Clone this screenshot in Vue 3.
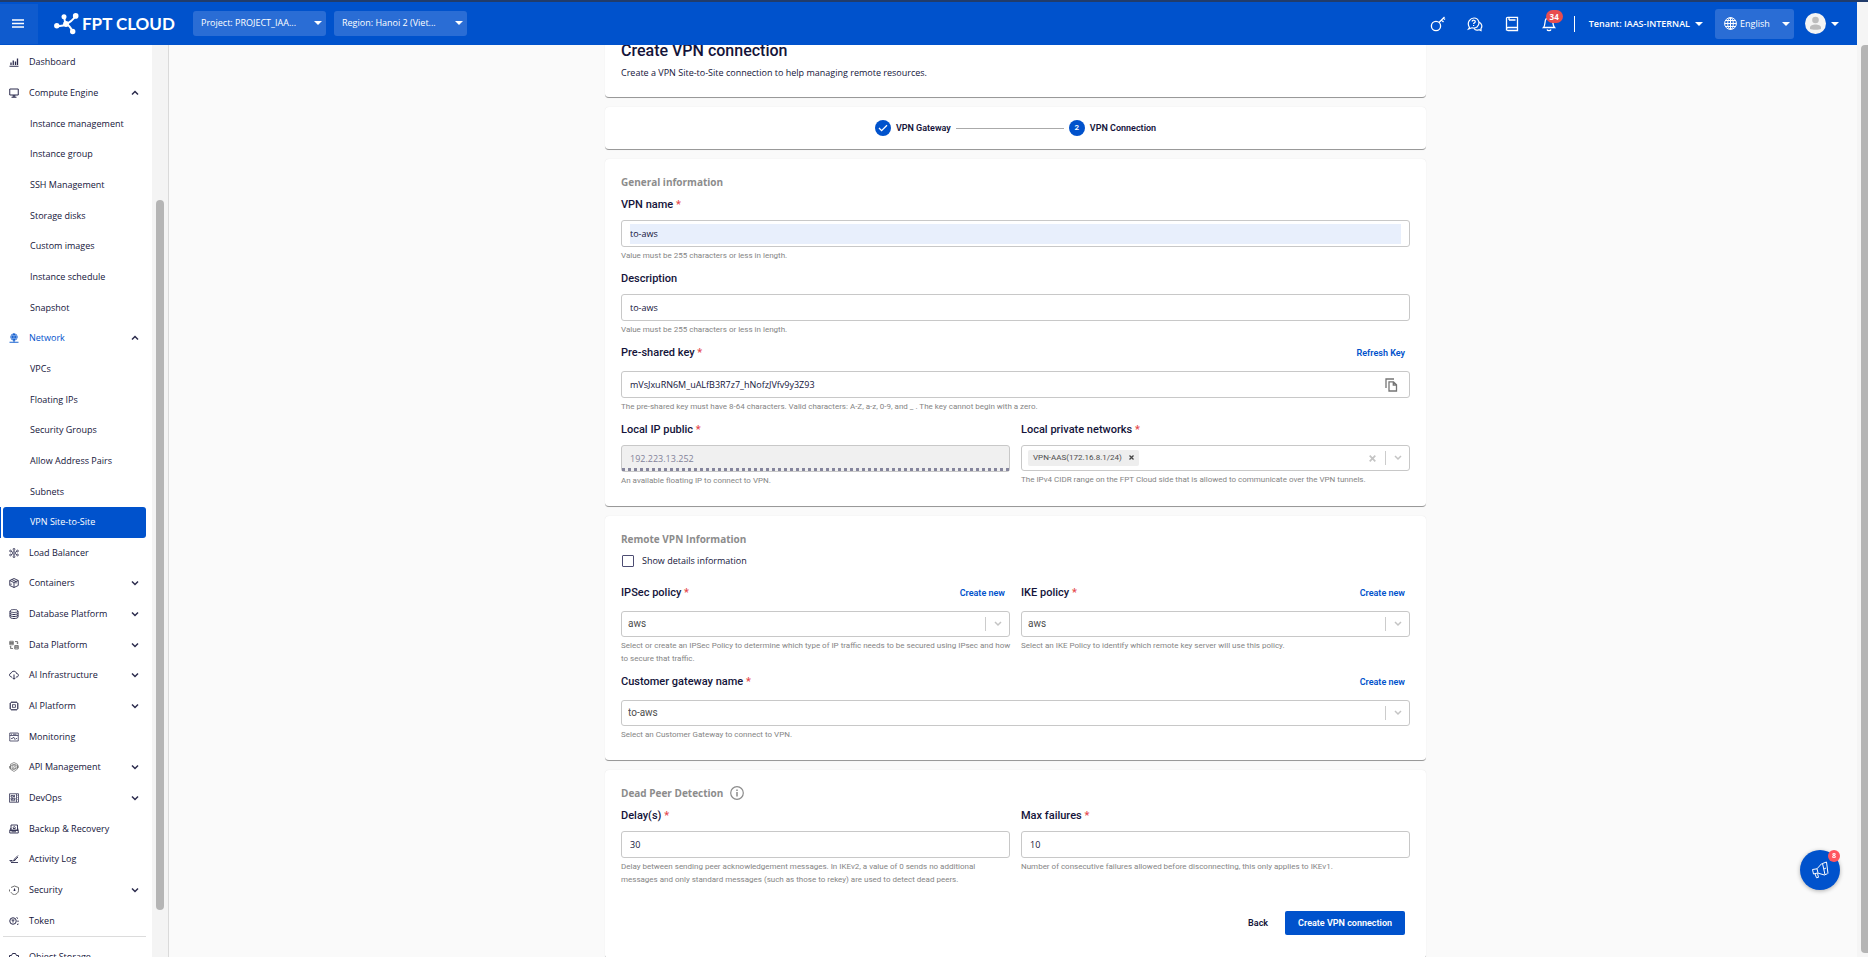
<script setup>
import { ref } from 'vue'

const icons = {
  chart: '<path d="M1 18.500h18" stroke-width="2"/><path d="M4 16V11M8.500 16V7M13 16V9M17 16V3" stroke-width="2.600"/>',
  monitor: '<path d="M1.500 2h17v12h-17zM10 14v4M5 18.500h10M7 16h6" stroke-width="2"/>',
  network: '<circle cx="10" cy="8" r="6.500"/><path d="M3.500 8h13M10 1.500v17M10 1.500c-4 3-4 10 0 13M10 1.500c4 3 4 10 0 13M1 18.500h18" stroke-width="1.800"/>',
  balancer: '<circle cx="10" cy="10" r="2.500"/><path d="M10 7.500V4M10 12.500V16M12 9l4-2.500M8 9L4 6.500M12 11l4 2.500M8 11l-4 2.500"/><circle cx="10" cy="2.500" r="1.800"/><circle cx="10" cy="17.500" r="1.800"/><circle cx="17" cy="6" r="1.800"/><circle cx="3" cy="6" r="1.800"/><circle cx="17" cy="14" r="1.800"/><circle cx="3" cy="14" r="1.800"/>',
  box: '<path d="M10 1l8.500 4v10L10 19l-8.500-4V5zM1.500 5L10 9l8.500-4M10 9v10M5.500 3l8.500 4v4M4 11v3" stroke-width="1.800"/>',
  database: '<ellipse cx="10" cy="4" rx="8" ry="3"/><path d="M2 4v12c0 4 16 4 16 0V4M2 8c0 4 16 4 16 0M2 12c0 4 16 4 16 0" stroke-width="2"/>',
  data: '<path d="M1.500 2.500h7v7h-7zM1.500 5h7M1.500 7h7M11.500 11h7v7h-7zM11.500 13.500h7M11.500 15.500h7M12 3h5v4M8 17H3v-4M15 5.500l2 2 2-2M1.500 14l1.500-1.500L5 14" stroke="#555"/>',
  cloud: '<path d="M6 14H5C0 13 0 7 4 6.500 6 1 14 1 15 7c5 0 5 7 0 7h-1M10 9v9M7 15.500l3 3 3-3" stroke-width="2"/>',
  chip: '<rect x="3" y="3" width="14" height="14" rx="1"/><rect x="7" y="7.500" width="6" height="5"/><path d="M6 3V.5M10 3V.5M14 3V.5M6 17v2.500M10 17v2.500M14 17v2.500M3 6H.5M3 10H.5M3 14H.5M17 6h2.500M17 10h2.500M17 14h2.500" stroke-width="2"/>',
  window: '<path d="M1.500 2h17v16h-17zM1.500 7h17M4 4.500h2M8 4.500h7M4 13h3l2-3 3 5 2-2h2"/>',
  api: '<path d="M10 1l7 3.500V14L10 19l-7-4.500v-10zM1 8c0 10 16 8 18-1M1 13C2 3 17 2 19 12M8 11l4-2" stroke="#555" stroke-width="1.200"/><circle cx="10" cy="10" r="4" stroke="#555" stroke-width="1.200"/>',
  devops: '<path d="M1 1.500h18v17H1zM15 2v16M3.500 15.500h9"/><path d="M4 5h5v3H4zM4 10h3v3H4zM9.500 10h2.500v3H9.500zM11 4v4M17 5v1M17 9v1M17 13v1"/>',
  backup: '<path d="M4 2h13v10H4zM1.500 13h17v5h-17zM1.500 13L4 8M18.500 13L17 8M5 15.500h9" stroke-width="1.800"/><path d="M8 9h5M8 7.500c1-3 4-3 5 0" stroke-width="1.800"/>',
  activity: '<path d="M18 3l-7 7M18 6l-6 6M11 10l-2 4 4-2M1 13h6M4 17h14M3 15c3-4 4 0 2 2" stroke-width="1.800"/>',
  shield: '<path d="M4 5l7-3 8 3v6c0 5-5 7.500-8 8.500-3-1-6-2.500-7-5M1 9v4" stroke="#555" stroke-width="1.700"/><path d="M11 7v5M9 10.500h4" stroke-width="2"/>',
  token: '<circle cx="8" cy="10" r="6.500" stroke-width="2"/><path d="M5 8h6M8 8v5M15 3l3 2M16 17l3-1M18 9v3" stroke-width="2"/>',
  storage: '<path d="M1 7h4l2-4h6l2 4h4v12H1z" stroke-width="2"/>'
}

const menu = [
  { label: 'Dashboard', icon: 'chart' },
  { label: 'Compute Engine', icon: 'monitor', arrow: 'up' },
  { label: 'Instance management', sub: true },
  { label: 'Instance group', sub: true },
  { label: 'SSH Management', sub: true },
  { label: 'Storage disks', sub: true },
  { label: 'Custom images', sub: true },
  { label: 'Instance schedule', sub: true },
  { label: 'Snapshot', sub: true },
  { label: 'Network', icon: 'network', arrow: 'up', open: true },
  { label: 'VPCs', sub: true },
  { label: 'Floating IPs', sub: true },
  { label: 'Security Groups', sub: true },
  { label: 'Allow Address Pairs', sub: true },
  { label: 'Subnets', sub: true },
  { label: 'VPN Site-to-Site', sub: true, active: true },
  { label: 'Load Balancer', icon: 'balancer' },
  { label: 'Containers', icon: 'box', arrow: 'down' },
  { label: 'Database Platform', icon: 'database', arrow: 'down' },
  { label: 'Data Platform', icon: 'data', arrow: 'down' },
  { label: 'AI Infrastructure', icon: 'cloud', arrow: 'down' },
  { label: 'AI Platform', icon: 'chip', arrow: 'down' },
  { label: 'Monitoring', icon: 'window' },
  { label: 'API Management', icon: 'api', arrow: 'down' },
  { label: 'DevOps', icon: 'devops', arrow: 'down' },
  { label: 'Backup & Recovery', icon: 'backup' },
  { label: 'Activity Log', icon: 'activity' },
  { label: 'Security', icon: 'shield', arrow: 'down' },
  { label: 'Token', icon: 'token' }
]

const name = ref('to-aws')
const description = ref('to-aws')
const sharedKey = ref('mVsJxuRN6M_uALfB3R7z7_hNofzJVfv9y3Z93')
const showDetails = ref(false)
const delay = ref('30')
const maxFailures = ref('10')
</script>

<template>
  <div class="app">
    <div class="strip"></div>
    <div class="shell">
      <header class="topbar">
        <button class="burger" aria-label="Toggle menu">
          <svg width="12" height="9" viewBox="0 0 12 9"><path d="M0 1h12M0 4.500h12M0 8h12" stroke="#fff" stroke-width="1.600" /></svg>
        </button>
        <a href="#" class="logo">
          <svg width="25" height="22" viewBox="0 0 25 22" fill="#fff" stroke="#fff">
            <g stroke="none"><circle cx="2.800" cy="12.700" r="2.700" /><circle cx="10" cy="3.700" r="2.500" /><circle cx="21.700" cy="2.900" r="2.800" /><circle cx="18.700" cy="18.500" r="2.700" /><circle cx="12" cy="11" r="2.900" /></g>
            <path d="M3 12.700c4 .8 7-.2 9-2M10 4l1.500 7M12 11c4-1.500 7-4 9.500-8M12 11c3 1 5 4 6.500 7.500" fill="none" stroke-width="1.900" />
          </svg>
          <span>FPT CLOUD</span>
        </a>
        <div class="pick scope">
          <select aria-label="Project"><option>Project: PROJECT_IAA...</option></select>
          <i class="caret"></i>
        </div>
        <div class="pick scope">
          <select aria-label="Region"><option>Region: Hanoi 2 (Viet...</option></select>
          <i class="caret"></i>
        </div>
        <div class="tools">
          <button aria-label="Keys"><svg width="16" height="16" viewBox="0 0 16 16"><circle cx="6" cy="10" r="4.600" /><path d="M9 6.500L14.500 1M11.500 4l2 2M13.500 2l1.500 1.500" /></svg></button>
          <button aria-label="Support"><svg width="16" height="16" viewBox="0 0 16 16"><path d="M2.500 11.500C-1 6 4 2 7 2c5 0 6.500 6 3 9-2 1.500-4 1-5 .8L1.500 13zM12 6c3 1.500 3.500 4.500 2 6.500v2l-2-.8c-2 .8-4 .3-5-1.200M5 5.500c.5-2 3.500-1.500 3.200.3-.2 1-1.600 1-1.600 2.200M6.600 9v1" stroke-width="1.200" /></svg></button>
          <button aria-label="Docs"><svg width="16" height="16" viewBox="0 0 16 16"><path d="M2.500 14.500V2.500c0-.8.4-1.200 1.200-1.200h9.800v10.200H4c-2 0-2 3 0 3h9.500v-3M5 4h6.500M5 2v2" /></svg></button>
          <button aria-label="Notifications" class="bell"><svg width="16" height="16" viewBox="0 0 16 16"><path d="M2.500 11.500c2-2 1-7 2.500-8.500s5-1.500 6 0 .5 6.500 2.500 8.500zM6 13.500c.5 1.500 3.500 1.500 4 0" /></svg><b>34</b></button>
        </div>
        <button class="tenant">Tenant: IAAS-INTERNAL <i class="caret"></i></button>
        <div class="pick lang">
          <svg width="13" height="13" viewBox="0 0 13 13" fill="none" stroke="#fff"><circle cx="6.500" cy="6.500" r="5.900" /><ellipse cx="6.500" cy="6.500" rx="2.800" ry="5.900" /><path d="M6.500.5v12M.5 6.500h12M1.500 3.500h10M1.500 9.500h10" /></svg>
          <select aria-label="Language"><option>English</option></select>
          <i class="caret"></i>
        </div>
        <button class="user" aria-label="Account">
          <svg width="21" height="21" viewBox="0 0 21 21"><circle cx="10.500" cy="10.500" r="10.500" fill="#f4f4f4" /><circle cx="10.500" cy="7" r="3.300" fill="#bdbdbd" /><path d="M5 14.500c0-4 11-4 11 0v1.500c-2 1-9 1-11 0z" fill="#bdbdbd" /></svg>
          <i class="caret"></i>
        </button>
      </header>

      <div class="body">
        <aside class="sidebar">
          <nav>
            <ul class="menu">
              <li v-for="m in menu" :key="m.label" :class="{ sub: m.sub, active: m.active, open: m.open }">
                <a href="#">
                  <svg v-if="m.icon" class="ico" viewBox="0 0 20 20" v-html="icons[m.icon]"></svg>
                  <span>{{ m.label }}</span>
                  <svg v-if="m.arrow" class="arrow" viewBox="0 0 8 6"><path :d="m.arrow === 'up' ? 'M1 4.500l3-3 3 3' : 'M1 1.500l3 3 3-3'" /></svg>
                </a>
              </li>
            </ul>
            <ul class="more">
              <li><a href="#"><svg class="ico" viewBox="0 0 20 20" v-html="icons.storage"></svg><span>Object Storage</span></a></li>
            </ul>
          </nav>
          <div class="track"><div class="thumb"></div></div>
        </aside>

        <main>
          <div class="column">
            <section class="card intro">
              <h1>Create VPN connection</h1>
              <p>Create a VPN Site-to-Site connection to help managing remote resources.</p>
            </section>

            <section class="card stepper">
              <ol class="steps">
                <li><span class="dot"><svg width="10" height="8" viewBox="0 0 10 8"><path d="M1 4l2.600 2.600L9 1.200" fill="none" stroke="#fff" stroke-width="1.300" /></svg></span>VPN Gateway</li>
                <li class="line"></li>
                <li><span class="dot">2</span>VPN Connection</li>
              </ol>
            </section>

            <section class="card">
              <h2>General information</h2>
              <div class="field">
                <div class="head"><label for="name">VPN name <em>*</em></label></div>
                <div class="box"><input id="name" v-model="name" class="filled" /></div>
                <p class="help">Value must be 255 characters or less in length.</p>
              </div>
              <div class="field">
                <div class="head"><label for="desc">Description</label></div>
                <div class="box"><input id="desc" v-model="description" /></div>
                <p class="help">Value must be 255 characters or less in length.</p>
              </div>
              <div class="field">
                <div class="head tall"><label for="key">Pre-shared key <em>*</em></label><button class="link">Refresh Key</button></div>
                <div class="box">
                  <input id="key" v-model="sharedKey" />
                  <button class="copy" aria-label="Copy key"><svg width="13" height="14" viewBox="0 0 13 14"><path d="M1 10V1h8M4 3.800h4.500l3 3V13H4zM8.300 4v3h3" fill="none" stroke="#757575" stroke-width="1.300" /></svg></button>
                </div>
                <p class="help">The pre-shared key must have 8-64 characters. Valid characters: A-Z, a-z, 0-9, and _ . The key cannot begin with a zero.</p>
              </div>
              <div class="pair">
                <div class="field">
                  <div class="head"><label for="ip">Local IP public <em>*</em></label></div>
                  <div class="box off"><input id="ip" value="192.223.13.252" disabled /></div>
                  <p class="help">An available floating IP to connect to VPN.</p>
                </div>
                <div class="field">
                  <div class="head"><label for="nets">Local private networks <em>*</em></label></div>
                  <div class="box choice multi">
                    <span class="chip">VPN-AAS(172.16.8.1/24)<button aria-label="Remove network"><svg width="5" height="5" viewBox="0 0 5 5"><path d="M.5.500l4 4M4.500.500l-4 4" stroke="#444" stroke-width="1.300" /></svg></button></span>
                    <input id="nets" />
                    <button class="clear" aria-label="Clear networks"><svg width="7" height="7" viewBox="0 0 7 7"><path d="M.7.700l5.600 5.600M6.300.700L.7 6.300" stroke="#c4c4c4" stroke-width="1.700" /></svg></button>
                    <span class="end"><svg width="8" height="6" viewBox="0 0 8 6"><path d="M1 1l3 3 3-3" /></svg></span>
                  </div>
                  <p class="help">The IPv4 CIDR range on the FPT Cloud side that is allowed to communicate over the VPN tunnels.</p>
                </div>
              </div>
            </section>

            <section class="card">
              <h2>Remote VPN Information</h2>
              <label class="check"><input v-model="showDetails" type="checkbox" />Show details information</label>
              <div class="pair">
                <div class="field">
                  <div class="head tall"><label for="ipsec">IPSec policy <em>*</em></label><button class="link">Create new</button></div>
                  <div class="box choice">
                    <select id="ipsec"><option>aws</option></select>
                    <span class="end"><svg width="8" height="6" viewBox="0 0 8 6"><path d="M1 1l3 3 3-3" /></svg></span>
                  </div>
                  <p class="help">Select or create an IPSec Policy to determine which type of IP traffic needs to be secured using IPsec and how to secure that traffic.</p>
                </div>
                <div class="field">
                  <div class="head tall"><label for="ike">IKE policy <em>*</em></label><button class="link">Create new</button></div>
                  <div class="box choice">
                    <select id="ike"><option>aws</option></select>
                    <span class="end"><svg width="8" height="6" viewBox="0 0 8 6"><path d="M1 1l3 3 3-3" /></svg></span>
                  </div>
                  <p class="help">Select an IKE Policy to identify which remote key server will use this policy.</p>
                </div>
              </div>
              <div class="field">
                <div class="head tall"><label for="gw">Customer gateway name <em>*</em></label><button class="link">Create new</button></div>
                <div class="box choice">
                  <select id="gw"><option>to-aws</option></select>
                  <span class="end"><svg width="8" height="6" viewBox="0 0 8 6"><path d="M1 1l3 3 3-3" /></svg></span>
                </div>
                <p class="help">Select an Customer Gateway to connect to VPN.</p>
              </div>
            </section>

            <section class="card">
              <h2>Dead Peer Detection <svg width="14" height="14" viewBox="0 0 14 14" fill="none" stroke="#8c8c8c"><circle cx="7" cy="7" r="6.300" stroke-width="1.200" /><path d="M7 6v4.500M7 3.500v1.400" stroke-width="1.500" /></svg></h2>
              <div class="pair">
                <div class="field">
                  <div class="head"><label for="delay">Delay(s) <em>*</em></label></div>
                  <div class="box"><input id="delay" v-model="delay" /></div>
                  <p class="help">Delay between sending peer acknowledgement messages. In IKEv2, a value of 0 sends no additional messages and only standard messages (such as those to rekey) are used to detect dead peers.</p>
                </div>
                <div class="field">
                  <div class="head"><label for="max">Max failures <em>*</em></label></div>
                  <div class="box"><input id="max" v-model="maxFailures" /></div>
                  <p class="help">Number of consecutive failures allowed before disconnecting, this only applies to IKEv1.</p>
                </div>
              </div>
              <div class="actions">
                <button class="back">Back</button>
                <button class="primary">Create VPN connection</button>
              </div>
            </section>
          </div>
        </main>
      </div>
    </div>
    <div class="pagebar"><div class="pagethumb"></div></div>

    <button class="fab" aria-label="Announcements">
      <svg width="18" height="18" viewBox="0 0 18 18" fill="none" stroke="#fff"><path d="M1.500 8.500l1 4.500 4-1 7 2 .5-.3L11.500 2.500l-1 .3-4.500 5zM6 7.800l1 4M11.500 2.500L15.500 1M14 13.700l2.500-1M15.500 1l1.500 11.500M4 12.800l1.500 4 2-.5-1-4M13 8l2-1" /></svg>
      <b>8</b>
    </button>
  </div>
</template>

<style>
html,
body {
  overflow: hidden;
}
</style>

<style scoped>
* {
  box-sizing: border-box;
}
.app {
  display: grid;
  grid-template: 2px 1fr / 1fr 11px;
  height: 100vh;
  font: 9px/16px "Open Sans", "Noto Sans", sans-serif;
  color: #14143a;
  background: #fafafa;
}
button,
input,
select {
  font: inherit;
  color: inherit;
  margin: 0;
  padding: 0;
  border: 0;
  background: none;
  outline: 0;
  appearance: none;
}
button {
  cursor: pointer;
}
a {
  color: inherit;
  text-decoration: none;
}
ul,
ol {
  list-style: none;
  margin: 0;
  padding: 0;
}
.strip {
  grid-column: 1 / 3;
  background: #213c6b;
}
.shell {
  display: flex;
  flex-direction: column;
  min-width: 0;
  min-height: 0;
}
.topbar {
  flex: 0 0 43px;
  display: flex;
  align-items: center;
  padding-right: 18px;
  background: #0052cc;
  color: #fff;
}
.burger {
  width: 38px;
  height: 40px;
  padding-right: 2px;
  display: grid;
  place-items: center;
  background: #0f5bce;
}
.logo {
  display: flex;
  align-items: center;
  gap: 3px;
  width: 139px;
  margin-left: 16px;
  font: 700 17px/22px Lato, sans-serif;
  white-space: nowrap;
}
.pick {
  display: flex;
  align-items: center;
  background: #2a6dd5;
  border-radius: 3px;
}
.pick select {
  flex: 1;
  min-width: 0;
}
.pick option {
  color: #14143a;
}
.scope {
  width: 133px;
  height: 25px;
  padding: 0 4px 2px 8px;
  margin-right: 8px;
}
.caret {
  display: inline-block;
  border: 4px solid transparent;
  border-top-color: #fff;
  border-bottom: 0;
}
.tools {
  display: flex;
  gap: 21px;
  margin-left: auto;
  padding-right: 17px;
  margin-right: 14px;
  border-right: 1px solid #fff;
}
.tools button {
  display: block;
  position: relative;
  width: 16px;
  height: 16px;
}
.tools svg {
  display: block;
  fill: none;
  stroke: #fff;
  stroke-width: 1.300;
}
.bell b {
  position: absolute;
  left: 5px;
  top: -6px;
  width: 17px;
  height: 13px;
  border-radius: 7px;
  background: #e84d4f;
  font: 700 8px/13px "Open Sans", sans-serif;
}
.tenant {
  display: flex;
  align-items: center;
  gap: 5px;
  margin-right: 12px;
  font-weight: 600;
  white-space: nowrap;
}
.lang {
  width: 79px;
  height: 30px;
  padding: 0 4px 0 9px;
  gap: 3px;
}
.user {
  display: flex;
  align-items: center;
  gap: 5px;
  margin-left: 11px;
}
.body {
  flex: 1;
  min-height: 0;
  display: flex;
}
.sidebar {
  flex: 0 0 169px;
  display: flex;
  border-right: 1px solid #dadada;
  background: #fff;
}
nav {
  flex: 1;
  display: flex;
  flex-direction: column;
  min-height: 0;
  padding: 2px 6px 0 3px;
}
.menu {
  flex: 1;
  display: flex;
  flex-direction: column;
}
.menu li {
  flex: 1;
  display: flex;
  position: relative;
}
.menu a,
.more a {
  flex: 1;
  display: flex;
  align-items: center;
  padding: 0 7px 0 6px;
  border-radius: 3px;
  white-space: nowrap;
}
.menu span,
.more span {
  flex: 1;
}
.ico {
  width: 10px;
  height: 10px;
  margin-right: 10px;
  fill: none;
  stroke: #2b2b4d;
  stroke-width: 1.500;
}
.open a {
  color: #0052cc;
}
.open .ico {
  stroke: #0052cc;
}
.menu .sub a {
  padding-left: 27px;
}
.menu .active a {
  background: #0052cc;
  color: #fff;
}
.active::before {
  content: "";
  position: absolute;
  left: -3px;
  top: 0;
  bottom: 0;
  width: 1px;
  background: #0052cc;
}
.arrow {
  width: 8px;
  height: 6px;
  fill: none;
  stroke: #2b2b4d;
  stroke-width: 1.500;
}
.more {
  height: 21px;
  overflow: hidden;
  border-top: 1px solid #dcdcdc;
  padding-top: 12px;
}
.track {
  flex: 0 0 16px;
  display: grid;
  grid-template-rows: 155fr 710fr 47fr;
  justify-items: center;
  background: #f4f4f4;
}
.thumb {
  grid-row: 2;
  width: 8px;
  border-radius: 4px;
  background: #b5b5b5;
}
main {
  flex: 1;
  min-width: 0;
  overflow: hidden;
  padding-left: 5px;
}
.column {
  display: flex;
  flex-direction: column;
  gap: 9px;
  max-width: 821px;
  margin: -23px auto 0;
}
.card {
  padding: 15px 16px 19px;
  background: #fff;
  border-radius: 4px;
  border-bottom: 1px solid #999;
  box-shadow: 0 0 1px rgba(0, 0, 0, 0.12);
}
.intro {
  padding: 16px;
}
.stepper {
  padding: 13px 16px;
}
h1 {
  margin: 0 0 1px;
  font: 500 16px/26px Roboto, sans-serif;
}
p {
  margin: 0;
}
.steps {
  display: flex;
  align-items: center;
  justify-content: center;
  gap: 5px;
  font: 600 9px/16px Roboto, sans-serif;
}
.steps li {
  display: flex;
  align-items: center;
  gap: 5px;
}
.steps .line {
  width: 108px;
  height: 1px;
  background: #aaa;
}
.dot {
  width: 16px;
  height: 16px;
  border-radius: 8px;
  display: grid;
  place-items: center;
  background: #0052cc;
  color: #fff;
  font-size: 8px;
}
h2 {
  display: flex;
  align-items: center;
  gap: 7px;
  margin: 0 0 7px;
  font: 700 10px/16px "Open Sans", sans-serif;
  color: #8c8c8c;
}
.field + .field,
.field + .pair,
.pair + .field {
  margin-top: 9px;
}
.pair {
  display: grid;
  grid-template-columns: 1fr 1fr;
  gap: 11px;
}
.pair .field {
  margin-top: 0;
}
.head {
  display: flex;
  justify-content: space-between;
  margin-bottom: 7px;
  padding-right: 5px;
}
.head.tall {
  margin-bottom: 10px;
}
.head label {
  font: 500 11px/16px Roboto, sans-serif;
}
em {
  font-style: normal;
  color: #e5484d;
}
.link {
  font: 600 9px/16px Roboto, sans-serif;
  height: 16px;
  color: #0052cc;
}
.box {
  display: flex;
  align-items: center;
  height: 27px;
  padding: 0 8px;
  border: 1px solid #c8c8c8;
  border-radius: 3px;
  background: #fff;
}
.box input,
.box select {
  flex: 1;
  min-width: 0;
  height: 20px;
}
.box .filled {
  background: #e8effc;
}
.copy {
  display: grid;
  margin-right: 3px;
}
.off {
  position: relative;
  background: #f0f0f0;
}
.off input {
  color: #83839a;
}
.off::after {
  content: "";
  position: absolute;
  left: 0;
  right: 0;
  bottom: 0;
  height: 3px;
  background: repeating-linear-gradient(90deg, #85859c 0 3px, transparent 3px 6px);
}
.choice {
  height: 26px;
  padding: 0 0 0 6px;
  font: 10px/16px Roboto, sans-serif;
  color: #4d4d4d;
}
.chip {
  display: flex;
  align-items: center;
  gap: 7px;
  height: 16px;
  padding: 0 5px 1px;
  border-radius: 2px;
  background: #eee;
  font-size: 8px;
  line-height: 16px;
}
.chip button {
  display: grid;
}
.clear {
  display: grid;
  padding: 0 9px;
}
.end {
  display: grid;
  align-items: center;
  height: 14px;
  padding: 0 7px 0 8px;
  border-left: 1px solid #ccc;
}
.end path {
  fill: none;
  stroke: #c4c4c4;
  stroke-width: 1.500;
}
.help {
  margin: 2px -2px 0 0;
  font: 8px/13px Roboto, sans-serif;
  color: #858585;
}
.check {
  display: flex;
  align-items: center;
  gap: 8px;
  height: 14px;
  margin-bottom: 17px;
  padding-left: 1px;
}
.check input {
  width: 12px;
  height: 12px;
  border: 1px solid #4d4d73;
  border-radius: 1px;
}
.check input:checked {
  background: #0052cc;
}
.actions {
  display: flex;
  justify-content: flex-end;
  gap: 17px;
  margin: 25px 5px 4px 0;
  font: 600 9px/24px Roboto, sans-serif;
}
.primary {
  height: 24px;
  padding: 0 13px;
  border-radius: 2px;
  background: #0052cc;
  color: #fff;
}
.pagebar {
  display: flex;
  justify-content: flex-end;
  padding: 43px 0 4px;
  background: #f5f5f5;
}
.pagethumb {
  width: 7px;
  border-radius: 4px 0 0 4px;
  background: #b5b5b5;
}
.fab {
  position: fixed;
  right: 28px;
  bottom: 67px;
  width: 40px;
  height: 40px;
  display: grid;
  place-items: center;
  border-radius: 50%;
  background: #0052cc;
  box-shadow: 0 1px 4px rgba(0, 0, 0, 0.3);
}
.fab b {
  position: absolute;
  top: 0;
  right: 0;
  width: 12px;
  height: 12px;
  border-radius: 6px;
  background: #ff5660;
  color: #fff;
  font: 700 7px/12px "Open Sans", sans-serif;
}
</style>
